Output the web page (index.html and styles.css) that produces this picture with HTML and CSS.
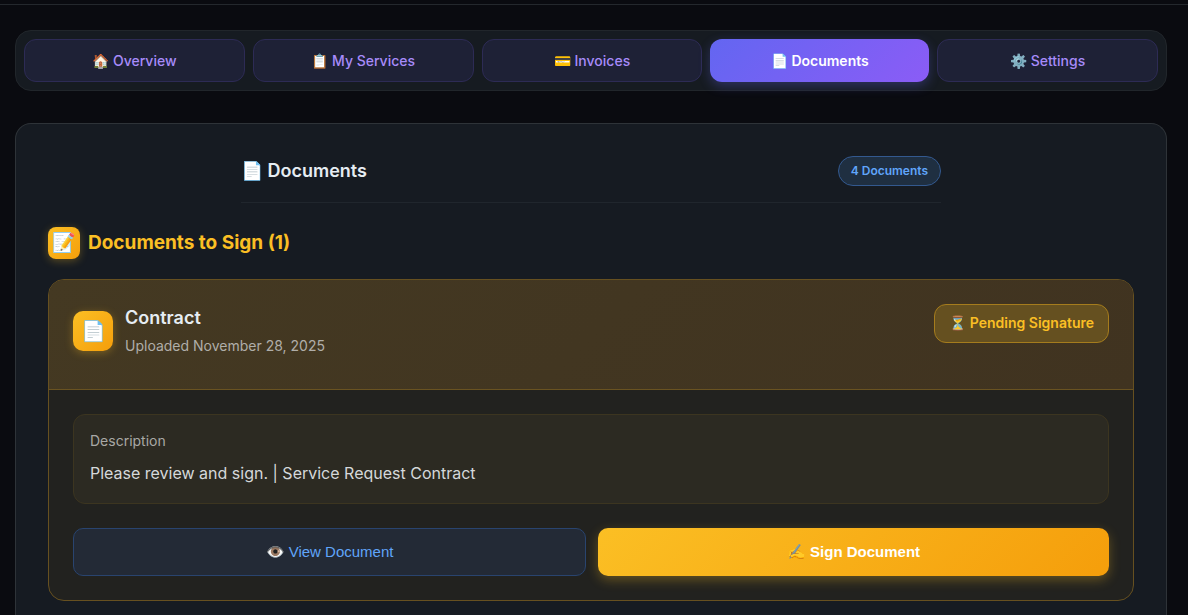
FILE: index.html
```html
<!DOCTYPE html>
<html lang="en"><head><meta charset="utf-8"><title>Documents</title><link rel="stylesheet" href="styles.css"></head>
<body>
<header class="topbar"></header>
<div class="page">
<nav class="tabs" aria-label="Dashboard">
<button class="tab">🏠 Overview</button>
<button class="tab">📋 My Services</button>
<button class="tab">💳 Invoices</button>
<button class="tab active">📄 Documents</button>
<button class="tab">⚙️ Settings</button>
</nav>
<main class="panel">
<div class="panel-head"><h2>📄 Documents</h2><span class="count">4 Documents</span></div>
<h3 class="section-title"><span class="section-icon">📝</span>Documents to Sign (1)</h3>
<article class="card">
<div class="card-head">
<span class="card-icon">📄</span>
<div class="card-info"><h4>Contract</h4><p>Uploaded November 28, 2025</p></div>
<span class="status">⏳ Pending Signature</span>
</div>
<div class="card-body">
<div class="description"><div class="label">Description</div><p>Please review and sign. | Service Request Contract</p></div>
<div class="actions"><button class="action view">👁️ View Document</button><button class="action sign">✍️ Sign Document</button></div>
</div>
</article>
</main>
</div>
</body></html>
```
FILE: styles.css
```css
* { box-sizing: border-box; }
html { background: #0a0b10; }
body { display: flex; flex-direction: column; min-height: 100vh; margin: 0; font-family: Inter, sans-serif; color: #e6edf3; line-height: 24px; }
h2, h3, h4, p { margin: 0; }
button { font-family: inherit; cursor: pointer; }
.topbar { height: 5px; border-bottom: 1px solid #24282d; }
.page { flex: 1; display: flex; flex-direction: column; padding: 25px 21px 0 15px; }
.tabs { display: flex; gap: 8px; padding: 8px; border: 1px solid #21262b; border-radius: 16px; background: #161b21; }
.tab { box-sizing: content-box; flex: 1 1 0; padding: 12px 0; border: 1px solid #2d2b55; border-radius: 12px; background: #1e2136; color: #a78bfa; font-size: 14px; line-height: 17px; font-weight: 500; }
.tab.active { border: 0; background: linear-gradient(135deg, #6366f1, #8b5cf6); color: #fff; font-weight: 600; box-shadow: 0 4px 12px #6366f14d; }
.panel { flex: 1; margin-top: 32px; padding: 32px 32px 0; border: 1px solid #2e3338; border-bottom: 0; border-radius: 16px 16px 0 0; background: #161b22; }
.panel-head { display: flex; justify-content: space-between; align-items: center; max-width: 700px; margin: 0 auto 24px; padding-bottom: 16px; border-bottom: 1px solid #20262d; }
h2 { font-size: 18px; font-weight: 600; }
.count { padding: 2px 12px; border: 1px solid #33598f; border-radius: 20px; background: #1f2f41; color: #60a5fa; font-size: 12px; font-weight: 600; }
.section-title { display: flex; align-items: center; gap: 8px; margin-bottom: 20px; color: #fbbf24; font-size: 19px; font-weight: 700; }
.section-icon, .card-icon { display: flex; align-items: center; justify-content: center; flex: none; background: linear-gradient(135deg, #fbbf24, #f59e0b); }
.section-icon { width: 32px; height: 32px; border-radius: 8px; box-shadow: 0 2px 8px #fbbf244d; }
.card { border: 1px solid #665020; border-radius: 16px; overflow: hidden; background: #22221f; }
.card-head { display: flex; min-height: 110px; padding: 24px; border-bottom: 1px solid #6a5321; background: linear-gradient(135deg, #443922, #403320); }
.card-icon { width: 40px; height: 40px; margin: 7px 12px 0 0; border-radius: 10px; box-shadow: 0 2px 8px #fbbf244d; font-size: 20px; }
h4 { font-size: 18px; line-height: 28px; font-weight: 600; }
.card-info p { margin-top: 2px; color: #b0aea9; font-size: 14px; }
.status { margin-left: auto; align-self: flex-start; padding: 7px 14px 8px; border: 1px solid #a57c1d; border-radius: 12px; background: #655020; color: #fbbf24; font-size: 14px; line-height: 22px; font-weight: 600; }
.card-body { padding: 24px; }
.description { padding: 16px; border: 1px solid #3c3520; border-radius: 12px; background: #2c2a22; }
.label { color: #a9a8a5; font-size: 14px; line-height: 20px; }
.description p { margin-top: 8px; color: #d5d8da; font-size: 16px; line-height: 28px; }
.actions { display: flex; gap: 12px; margin-top: 24px; }
.action { box-sizing: content-box; flex: 1 1 0; min-height: 46px; padding: 0; border: 1px solid #29446f; border-radius: 10px; background: #232a36; color: #60a5fa; font: 500 15px "Liberation Sans", Arial, sans-serif; }
.sign { border: 0; background: linear-gradient(135deg, #fbbf24, #f59e0b); color: #fff; font-weight: 700; box-shadow: 0 4px 12px #fbbf244d; }
```
